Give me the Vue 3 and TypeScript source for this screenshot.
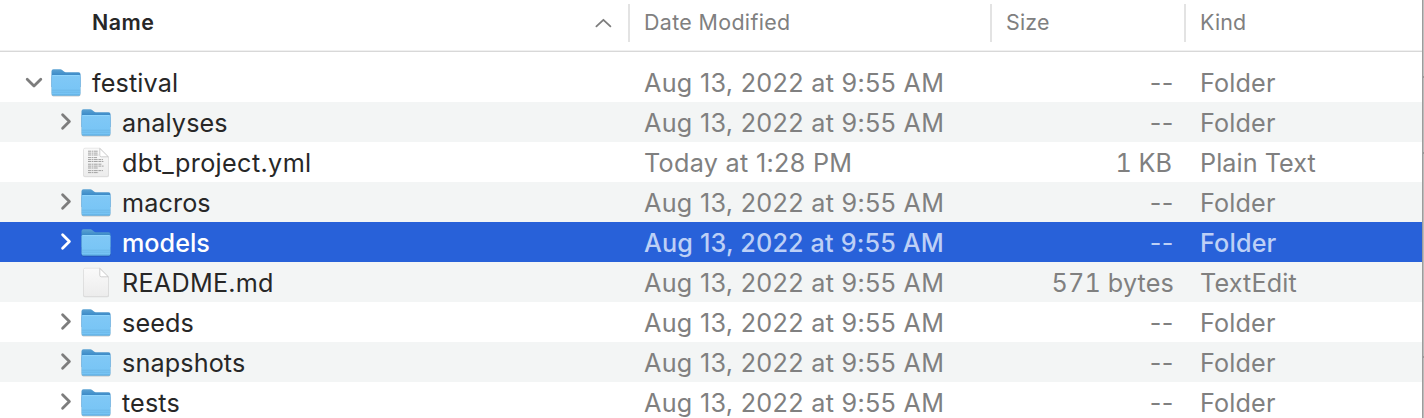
<script setup lang="ts">
interface Entry {
  name: string
  date: string
  size: string
  kind: string
  icon: 'folder' | 'text' | 'blank'
  open?: boolean
  root?: boolean
  selected?: boolean
}

const stamp = 'Aug 13, 2022 at 9:55 AM'
const folder = (name: string, extra: Partial<Entry> = {}): Entry => ({
  name, date: stamp, size: '--', kind: 'Folder', icon: 'folder', ...extra,
})

const entries: Entry[] = [
  folder('festival', { open: true, root: true }),
  folder('analyses'),
  { name: 'dbt_project.yml', date: 'Today at 1:28 PM', size: '1 KB', kind: 'Plain Text', icon: 'text' },
  folder('macros'),
  folder('models', { selected: true }),
  { name: 'README.md', date: stamp, size: '571 bytes', kind: 'TextEdit', icon: 'blank' },
  folder('seeds'),
  folder('snapshots'),
  folder('tests'),
]
</script>

<template>
  <div class="window">
    <svg class="defs" width="0" height="0">
      <defs>
        <linearGradient id="front" x1="0" y1="0" x2="0" y2="1">
          <stop offset="0" stop-color="#80c8f6" />
          <stop offset="1" stop-color="#76c4f5" />
        </linearGradient>
        <linearGradient id="back" x1="0" y1="0" x2="0" y2="1">
          <stop offset="0" stop-color="#5ba3d4" />
          <stop offset=".4" stop-color="#3584c4" />
          <stop offset="1" stop-color="#3584c4" />
        </linearGradient>
        <linearGradient id="paper" x1="0" y1="0" x2="0" y2="1">
          <stop offset="0" stop-color="#fafafa" />
          <stop offset="1" stop-color="#ececec" />
        </linearGradient>
      </defs>
    </svg>
    <div class="list">
      <header class="head">
        <div class="h-name">
          <span>Name</span>
          <svg class="sort" width="18" height="12" viewBox="0 0 18 12">
            <path d="M2.4 9.4 9.4 2.8l7 6.6" fill="none" stroke="#7d7d7d" stroke-width="1.8" stroke-linecap="round" stroke-linejoin="round" />
          </svg>
        </div>
        <div class="h-cell h-date">Date Modified</div>
        <div class="h-cell">Size</div>
        <div class="h-cell">Kind</div>
      </header>
      <div class="rows">
        <div
          v-for="e in entries"
          :key="e.name"
          class="row"
          :class="[e.icon, { root: e.root, selected: e.selected }]"
        >
          <div class="name">
            <span class="arrow">
              <svg v-if="e.open" width="20" height="20" viewBox="0 0 20 20">
                <path d="M3.2 7.2 10 14 16.8 7.2" />
              </svg>
              <svg v-else-if="e.icon === 'folder'" width="20" height="20" viewBox="0 0 20 20">
                <path d="M6.6 2.8 13.4 9.5 6.6 16.2" />
              </svg>
            </span>
            <svg v-if="e.icon === 'folder'" class="icon" width="32" height="32" viewBox="0 0 32 32">
              <rect x="1.4" y="9" width="29.2" height="20.4" rx="1.8" fill="#000" opacity=".2" />
              <path d="M1.5 4.2Q1.5 2.3 3.5 2.3H10.4Q11.4 2.3 12.1 3L14 4.6Q14.7 5.2 15.8 5.2H28.5Q30.5 5.2 30.5 7.2V20H1.5Z" fill="url(#back)" />
              <path d="M1.5 9.5Q1.5 8.1 3 8.1H29Q30.5 8.1 30.5 9.5V26.5Q30.5 28.4 28.6 28.4H3.4Q1.5 28.4 1.5 26.5Z" fill="url(#front)" />
              <path d="M2.5 8.6H29.5" stroke="#96d8fd" stroke-width=".8" />
              <path d="M1.8 23.2H30.2M1.8 25.2H30.2" stroke="#68b3e4" stroke-width=".7" />
              <path d="M2 28H30" stroke="#56a5d9" stroke-width=".9" />
            </svg>
            <svg v-else class="icon" width="32" height="32" viewBox="0 0 32 32">
              <path d="M3.4 3H20L29 11V28.8Q29 30.2 27.4 30.2H4.8Q3.2 30.2 3.2 28.8Z" fill="#000" opacity=".12" />
              <path d="M3.5 2.6Q3.5 1.2 5.2 1.2H19.8L28.5 9.9V28Q28.5 29.5 26.9 29.5H5.1Q3.5 29.5 3.5 28Z" fill="url(#paper)" stroke="#d8d8d8" stroke-width=".6" />
              <path v-if="e.icon === 'text'" class="copy" d="M8 4.2H18M8 6.1H17.6M8 8H18.6M8 10.6H17M8 12.6H23M8 14.5H23.4M8 17.2H22M8 19.1H23.6M8 21H18M8 23.6H23M8 25.6H18.5" />
              <path d="M19.8 1.4V8.3Q19.8 9.8 21.3 9.8H28.3Z" fill="#fff" stroke="#bdbdbd" stroke-width=".7" />
            </svg>
            <span class="label">{{ e.name }}</span>
          </div>
          <div class="date">{{ e.date }}</div>
          <div class="size">{{ e.size }}</div>
          <div class="kind">{{ e.kind }}</div>
        </div>
      </div>
    </div>
    <div class="edge"></div>
  </div>
</template>

<style>
body {
  margin: 0;
  overflow: hidden;
}
</style>

<style scoped>
.window {
  display: flex;
  width: 1424px;
  height: 418px;
  overflow: hidden;
  background: #fff;
  font-family: Inter, "Liberation Sans", sans-serif;
  color: #808080;
}
.defs {
  position: absolute;
}
.list {
  width: 1422px;
  flex: none;
}
.edge {
  width: 2px;
  box-sizing: border-box;
  border-left: 1px solid #9c9c9c;
  background: linear-gradient(
    #c0c0c0 76px, #999 76px, #999 78px, #bbb 78px, #bbb 152px,
    #999 152px, #999 154px, #bbb 154px, #bbb 356px, #999 356px,
    #999 358px, #bbb 358px
  );
}
.head {
  display: grid;
  grid-template-columns: 628px 362px 194px 1fr;
  height: 52px;
  box-sizing: border-box;
  border-bottom: 1px solid #d8d8d8;
  box-shadow: inset 0 -1px #f0f0f0;
  font-size: 21.4px;
  line-height: 44px;
  letter-spacing: 0.2px;
}
.h-name {
  display: flex;
  justify-content: space-between;
  height: 44px;
  padding: 0 16px 0 92px;
  font-weight: 600;
  letter-spacing: 0.5px;
  color: #272727;
}
.sort {
  margin-top: 17px;
}
.h-cell {
  height: 38px;
  margin-top: 4px;
  padding-left: 14px;
  border-left: 2px solid #e3e3e3;
  line-height: 36px;
}
.h-date {
  letter-spacing: 0.36px;
}
.rows {
  padding-top: 10px;
}
.row {
  display: grid;
  grid-template-columns: 644px 366px 164px 1fr;
  height: 40px;
  line-height: 42px;
  font-size: 25.2px;
  white-space: nowrap;
}
.row:nth-child(even) {
  background: #f3f5f5;
}
.name {
  display: flex;
  align-items: center;
  height: 40px;
  padding-left: 56px;
  letter-spacing: 0.12px;
  color: #272727;
}
.root .name {
  padding-left: 24px;
}
.root .arrow {
  width: 26px;
}
.arrow {
  display: flex;
  width: 24px;
  height: 20px;
}
.arrow path {
  fill: none;
  stroke: #7d7d7d;
  stroke-width: 2.8;
  stroke-linecap: round;
  stroke-linejoin: round;
}
.icon {
  display: block;
  margin-top: 2px;
}
.copy {
  fill: none;
  stroke: #a3a3a3;
  stroke-width: 1;
  stroke-dasharray: 3 0.6 1.6 0.5 4 0.7;
}
.label {
  margin: 2px 0 0 10px;
}
.text .name {
  letter-spacing: 0.37px;
}
.blank .name {
  letter-spacing: 0.25px;
}
.date {
  letter-spacing: 0.29px;
}
.size {
  text-align: right;
}
.text .size,
.blank .size {
  font-variant-numeric: tabular-nums;
  letter-spacing: 0.15px;
}
.folder .size {
  letter-spacing: 0.6px;
}
.text .size {
  padding-right: 2px;
  letter-spacing: 0;
}
.kind {
  padding-left: 26px;
  letter-spacing: 0.15px;
}
.text .kind {
  letter-spacing: 0.05px;
}
.row.selected {
  background: #2861d9;
  color: #bdd0f6;
}
.selected .name {
  letter-spacing: 0;
  color: #fff;
}
.selected .label,
.selected .date,
.selected .kind {
  font-weight: 500;
}
.selected .date {
  letter-spacing: 0.15px;
}
.selected .arrow path {
  stroke: #fff;
}
</style>
